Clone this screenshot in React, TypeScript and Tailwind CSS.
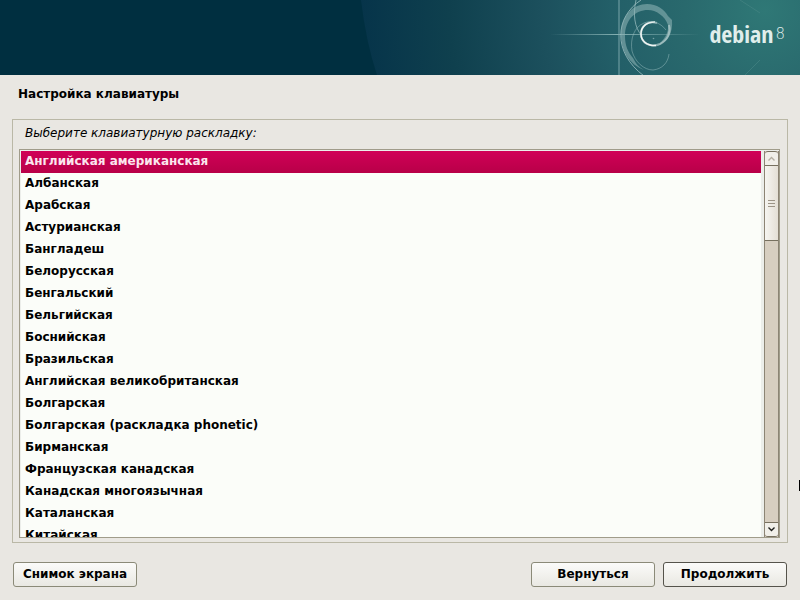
import React, { useRef, useState } from 'react';

const layouts = [
  'Английская американская',
  'Албанская',
  'Арабская',
  'Астурианская',
  'Бангладеш',
  'Белорусская',
  'Бенгальский',
  'Бельгийская',
  'Боснийская',
  'Бразильская',
  'Английская великобританская',
  'Болгарская',
  'Болгарская (раскладка phonetic)',
  'Бирманская',
  'Французская канадская',
  'Канадская многоязычная',
  'Каталанская',
  'Китайская',
];

const ROW_HEIGHT = 22;

function Banner() {
  return (
    <header className="relative flex h-[75px] shrink-0 items-center justify-end overflow-hidden bg-[#002f40] pr-[15px] pb-2">
      <svg className="absolute top-0 right-0 h-full w-[440px]" viewBox="360 0 440 75" fill="none" aria-hidden="true">
        <defs>
          <radialGradient id="glow" gradientUnits="userSpaceOnUse" cx="765" cy="10" r="405">
            <stop offset="0" stopColor="#2f7876" />
            <stop offset="0.2" stopColor="#29696d" />
            <stop offset="0.38" stopColor="#235f68" />
            <stop offset="0.55" stopColor="#1c505d" />
            <stop offset="0.78" stopColor="#0f404e" />
            <stop offset="1" stopColor="#06344a" />
          </radialGradient>
          <linearGradient id="beam" gradientUnits="userSpaceOnUse" x1="550" y1="0" x2="700" y2="0">
            <stop offset="0" stopColor="#9cc4c4" stopOpacity="0" />
            <stop offset="0.45" stopColor="#9cc4c4" stopOpacity="0.8" />
            <stop offset="1" stopColor="#9cc4c4" stopOpacity="0" />
          </linearGradient>
        </defs>
        <path d="M361 0 Q366 42 377 75 H800 V0 Z" fill="url(#glow)" />
        <rect x="550" y="34" width="150" height="1" fill="url(#beam)" />
        <path d="M619 0 V75" stroke="#7fa9ad" strokeOpacity="0.6" strokeWidth="1.6" />
        {/* outer arcs */}
        <path d="M641 0 C615 17 612 52 644 76" stroke="#a5c6c8" strokeOpacity="0.75" />
        <path d="M636 0 C633 14 634 27 642 36" stroke="#a5c6c8" strokeOpacity="0.7" />
        {/* brush stroke of the swirl */}
        <path d="M621 36 C620 15 634 4 647 4 C657 4 664 9 668 16 L672 20 C673 33 668 42 657 46 C664 40 669 33 668 25 C665 16 656 10 648 10 C635 10 625 20 625 36 C625 46 628 52 633 58 C636 64 639 67 644 70 C629 64 622 52 621 36 Z" fill="#8bb0b3" fillOpacity="0.6" />
        <path d="M657 23 C648 20 641 26 641 34 C641 43 650 48 660 44 C668 40 671 32 669 25" stroke="#bdd3d2" strokeOpacity="0.65" strokeWidth="2" />
        <path d="M655 22 C646 22 641 27 641 34 C641 41 647 46 656 45.5" stroke="#f0f5f3" strokeWidth="1.5" />
        <path d="M666 30 C660 22 651 20 644 23 C634 27 630 39 632 51 C635 62 644 70 653 70 C662 69 668 63 669 54" stroke="#9abec0" strokeOpacity="0.55" strokeWidth="0.9" />
        <circle cx="653.5" cy="38.5" r="0.8" fill="#9abec0" fillOpacity="0.7" />
        <path d="M740 0 L760 13 M745 75 L760 60" stroke="#4d8c8a" strokeOpacity="0.5" />
      </svg>
      <div className="relative flex items-center text-[#e0eeec]">
        <span className="font-['Liberation_Sans_Narrow','Open_Sans_Condensed','Noto_Sans_Condensed',sans-serif] text-[24px] leading-8">debian</span>
        <span className="ml-[2px] font-['DejaVu_Sans',sans-serif] text-[15px] leading-4 font-extralight">8</span>
      </div>
    </header>
  );
}

function ArrowIcon({ up }: { up?: boolean }) {
  return (
    <svg className="h-[5px] w-[7px]" viewBox="0 0 7 5" fill="none" aria-hidden="true">
      <path d={up ? 'M0.5 4.5 L3.5 1.5 L6.5 4.5' : 'M0.5 0.5 L3.5 3.5 L6.5 0.5'} stroke="currentColor" strokeWidth="1.4" />
    </svg>
  );
}

function DialogButton({ children, primary }: { children: React.ReactNode; primary?: boolean }) {
  return (
    <button
      type="button"
      className={`h-[25px] w-[124px] rounded-[3px] border bg-linear-to-b from-[#fbfbf9] to-[#e9e8e2] pb-px font-bold leading-4 ${
        primary ? 'border-[#55534b]' : 'border-[#8b8a78]'
      }`}
    >
      {children}
    </button>
  );
}

export default function App() {
  const [selected, setSelected] = useState(0);
  const listRef = useRef<HTMLDivElement>(null);

  const scrollList = (rows: number) => {
    listRef.current?.scrollBy({ top: rows * ROW_HEIGHT });
  };

  return (
    <div className="relative flex h-screen flex-col overflow-hidden bg-[#e9e7e2] font-['DejaVu_Sans',sans-serif] text-xs text-black">
      <Banner />

      <main className="flex min-h-0 flex-1 flex-col px-3 pt-[9px]">
        <h1 className="px-[6px] text-xs leading-5 font-bold">Настройка клавиатуры</h1>

        <section className="mt-[15px] flex min-h-0 flex-1 flex-col border border-[#bab8a6] pr-[7px] pb-1 pl-[6px]">
          <h2 id="layout-label" className="px-[6px] pt-[3px] pb-[6px] text-xs leading-5 italic">
            Выберите клавиатурную раскладку:
          </h2>

          <div className="flex min-h-0 flex-1 border border-[#a09c8a] bg-[#eceeea] pt-px pl-px">
            <div
              ref={listRef}
              role="listbox"
              aria-labelledby="layout-label"
              className="min-w-0 flex-1 overflow-y-auto bg-[#fbfdf9] [scrollbar-width:none]"
            >
              {layouts.map((layout, index) => (
                <button
                  key={layout}
                  type="button"
                  role="option"
                  aria-selected={index === selected}
                  onClick={() => setSelected(index)}
                  className={`block h-[22px] w-full px-1 pb-0.5 text-left leading-5 font-bold ${
                    index === selected ? 'bg-linear-to-b from-[#d10057] to-[#b80048] text-[#fbe6ee]' : ''
                  }`}
                >
                  {layout}
                </button>
              ))}
            </div>

            <div className="ml-[3px] flex w-[15px] flex-col border-x border-[#8c8474] bg-[#d7cec0]">
              <button
                type="button"
                aria-label="Прокрутить вверх"
                onClick={() => scrollList(-1)}
                className="flex h-[14px] items-center justify-center rounded-t-[3px] border-t border-[#77705f] bg-[#f1efe9] text-[#b5afa3]"
              >
                <ArrowIcon up />
              </button>
              <div className="flex h-[76px] flex-col items-center justify-center gap-[2px] border-y border-[#77705f] bg-linear-to-r from-[#f6f5f1] to-[#e4dfd5]">
                <span className="h-px w-[7px] bg-[#9c9486]" />
                <span className="h-px w-[7px] bg-[#9c9486]" />
                <span className="h-px w-[7px] bg-[#9c9486]" />
              </div>
              <button
                type="button"
                aria-label="Прокрутить вниз"
                onClick={() => scrollList(1)}
                className="mt-auto flex h-[15px] items-center justify-center rounded-b-[3px] border-y border-[#77705f] bg-[#f1efe9] text-[#1d1d1b]"
              >
                <ArrowIcon />
              </button>
            </div>
          </div>
        </section>
      </main>

      <footer className="flex shrink-0 gap-2 px-[13px] pt-[19px] pb-[13px]">
        <DialogButton>Снимок экрана</DialogButton>
        <div className="ml-auto flex gap-2">
          <DialogButton>Вернуться</DialogButton>
          <DialogButton primary>Продолжить</DialogButton>
        </div>
      </footer>

      {/* pointer parked at the right edge of the screen */}
      <span className="absolute right-0 bottom-[109px] h-[11px] w-px bg-black" />
    </div>
  );
}
